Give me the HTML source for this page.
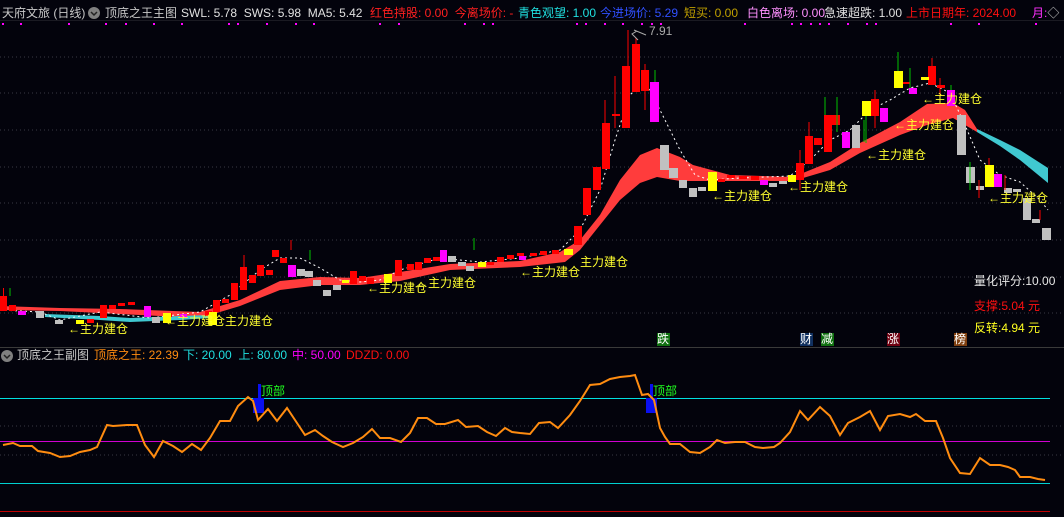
<!DOCTYPE html>
<html><head><meta charset="utf-8"><style>
html,body{margin:0;padding:0;background:#03030c;}
body{width:1064px;height:517px;overflow:hidden;position:relative;font-family:"Liberation Sans","Noto Sans CJK SC",sans-serif;}
.t{position:absolute;font-size:12px;white-space:nowrap;line-height:15px;}
</style></head><body>
<svg width="1064" height="517" style="position:absolute;left:0;top:0" xmlns="http://www.w3.org/2000/svg">
<g stroke="#3a3a44" stroke-dasharray="1,3" stroke-width="1">
<line x1="0" y1="57" x2="1064" y2="57"/><line x1="0" y1="93" x2="1064" y2="93"/><line x1="0" y1="130" x2="1064" y2="130"/><line x1="0" y1="167" x2="1064" y2="167"/><line x1="0" y1="203" x2="1064" y2="203"/><line x1="0" y1="240" x2="1064" y2="240"/><line x1="0" y1="277" x2="1064" y2="277"/><line x1="0" y1="313" x2="1064" y2="313"/>
<line x1="0" y1="426" x2="1064" y2="426"/><line x1="0" y1="455" x2="1064" y2="455"/>
</g>
<line x1="0" y1="347.5" x2="1064" y2="347.5" stroke="#3a3a3a"/>
<line x1="0" y1="20.5" x2="1064" y2="20.5" stroke="#1a1a22"/>
<g fill="#ff00ff">
<rect x="2" y="23" width="2" height="2"/><rect x="20" y="23" width="2" height="2"/><rect x="68" y="23" width="2" height="2"/><rect x="105" y="23" width="2" height="2"/><rect x="125" y="23" width="2" height="2"/><rect x="153" y="23" width="2" height="2"/><rect x="181" y="23" width="2" height="2"/><rect x="228" y="23" width="2" height="2"/><rect x="237" y="23" width="2" height="2"/><rect x="266" y="23" width="2" height="2"/><rect x="295" y="23" width="2" height="2"/><rect x="313" y="23" width="2" height="2"/><rect x="379" y="23" width="2" height="2"/><rect x="398" y="23" width="2" height="2"/><rect x="464" y="23" width="2" height="2"/><rect x="483" y="23" width="2" height="2"/><rect x="492" y="23" width="2" height="2"/><rect x="576" y="23" width="2" height="2"/><rect x="585" y="23" width="2" height="2"/><rect x="604" y="23" width="2" height="2"/><rect x="622" y="23" width="2" height="2"/><rect x="641" y="23" width="2" height="2"/><rect x="651" y="23" width="2" height="2"/><rect x="660" y="23" width="2" height="2"/><rect x="744" y="23" width="2" height="2"/><rect x="791" y="23" width="2" height="2"/><rect x="800" y="23" width="2" height="2"/><rect x="810" y="23" width="2" height="2"/><rect x="819" y="23" width="2" height="2"/><rect x="828" y="23" width="2" height="2"/><rect x="847" y="23" width="2" height="2"/><rect x="866" y="23" width="2" height="2"/><rect x="875" y="23" width="2" height="2"/><rect x="950" y="23" width="2" height="2"/><rect x="978" y="23" width="2" height="2"/><rect x="1035" y="23" width="2" height="2"/>
</g>
<polygon fill="#ff3c3c" points="0,306 60,308 120,309 200,312 240,300 280,281 320,277 360,278 400,272 450,264 520,261 560,252 580,240 600,215 620,180 640,155 657,148 680,157 693,165 730,175 793,177 830,162 860,143 900,122 927,104 953,103 965,110 977,129 977,132 965,125 953,118 927,125 900,135 860,153 830,170 793,181 730,181 693,181 680,181 657,177 640,183 620,200 600,225 580,250 565,262 520,267 450,270 400,281 360,285 320,285 280,290 240,306 200,318 120,314 60,311 0,310"/>
<polygon fill="#40c8d0" points="977,129 1000,140 1020,150 1048,168 1048,183 1020,160 1000,146 977,132"/>
<polygon fill="#40c8d0" points="45,314 100,316 130,318 180,316 210,315 210,318 180,320 130,322 100,320 45,317"/>
<polyline fill="none" stroke="#ffffff" stroke-width="1" stroke-dasharray="2,3" points="0,310 40,312 60,320 100,312 150,318 200,312 230,295 260,270 280,258 300,258 320,268 340,280 360,282 380,280 400,270 440,258 480,262 520,258 560,250 580,230 600,190 615,140 630,95 645,80 660,110 680,150 695,175 710,180 740,178 790,176 810,160 830,140 850,130 870,110 890,100 910,88 930,83 950,93 965,125 980,160 1000,175 1020,182 1040,200 1048,210"/>
<g fill="#ff0000">
<rect x="0" y="296" width="7" height="15"/><rect x="9" y="305" width="7" height="6"/><rect x="87" y="319" width="7" height="4"/><rect x="100" y="305" width="7" height="13"/><rect x="109" y="305" width="7" height="4"/><rect x="118" y="303" width="7" height="3"/><rect x="128" y="302" width="7" height="3"/><rect x="165" y="313" width="7" height="4"/><rect x="205" y="311" width="7" height="5"/><rect x="213" y="300" width="7" height="12"/><rect x="222" y="299" width="7" height="4"/><rect x="231" y="283" width="7" height="17"/><rect x="240" y="267" width="7" height="23"/><rect x="249" y="275" width="7" height="8"/><rect x="257" y="265" width="7" height="11"/><rect x="266" y="270" width="7" height="5"/><rect x="272" y="250" width="7" height="7"/><rect x="280" y="258" width="7" height="5"/><rect x="350" y="271" width="7" height="13"/><rect x="359" y="276" width="7" height="5"/><rect x="367" y="278" width="7" height="6"/><rect x="395" y="260" width="7" height="16"/><rect x="407" y="264" width="7" height="6"/><rect x="415" y="262" width="7" height="8"/><rect x="424" y="258" width="7" height="5"/><rect x="433" y="257" width="7" height="4"/><rect x="487" y="262" width="7" height="3"/><rect x="497" y="257" width="7" height="5"/><rect x="507" y="255" width="7" height="4"/><rect x="517" y="253" width="7" height="3"/><rect x="530" y="253" width="7" height="3"/><rect x="540" y="251" width="7" height="4"/><rect x="552" y="250" width="7" height="4"/>
<rect x="574" y="226" width="8" height="19"/><rect x="583" y="188" width="8" height="27"/><rect x="593" y="167" width="8" height="23"/><rect x="602" y="123" width="8" height="46"/><rect x="612" y="114" width="8" height="2"/><rect x="622" y="66" width="8" height="62"/><rect x="632" y="44" width="8" height="48"/><rect x="641" y="70" width="8" height="21"/><rect x="718" y="179" width="7" height="3"/><rect x="727" y="175" width="8" height="3"/><rect x="739" y="176" width="8" height="3"/><rect x="751" y="176" width="8" height="4"/><rect x="796" y="163" width="8" height="17"/><rect x="805" y="136" width="8" height="28"/><rect x="814" y="138" width="8" height="7"/><rect x="824" y="115" width="8" height="37"/><rect x="832" y="115" width="8" height="10"/><rect x="871" y="99" width="8" height="17"/><rect x="902" y="82" width="8" height="2"/><rect x="928" y="66" width="8" height="19"/><rect x="937" y="85" width="8" height="3"/>
</g>
<g fill="#ff00ff">
<rect x="18" y="311" width="8" height="4"/><rect x="144" y="306" width="7" height="11"/><rect x="180" y="314" width="7" height="4"/><rect x="288" y="265" width="8" height="12"/><rect x="440" y="250" width="7" height="12"/><rect x="519" y="256" width="7" height="4"/><rect x="650" y="82" width="9" height="40"/><rect x="760" y="180" width="8" height="5"/><rect x="842" y="132" width="8" height="16"/><rect x="880" y="108" width="8" height="14"/><rect x="909" y="88" width="8" height="6"/><rect x="947" y="90" width="8" height="16"/><rect x="994" y="174" width="8" height="13"/>
</g>
<g fill="#c0c0c0">
<rect x="36" y="311" width="8" height="7"/><rect x="55" y="320" width="8" height="4"/><rect x="152" y="317" width="8" height="6"/><rect x="297" y="269" width="8" height="7"/><rect x="305" y="271" width="8" height="6"/><rect x="313" y="280" width="8" height="6"/><rect x="323" y="290" width="8" height="6"/><rect x="333" y="285" width="8" height="5"/><rect x="448" y="256" width="8" height="6"/><rect x="458" y="262" width="8" height="4"/><rect x="466" y="266" width="8" height="5"/><rect x="660" y="145" width="9" height="25"/><rect x="669" y="168" width="9" height="10"/><rect x="679" y="180" width="8" height="8"/><rect x="689" y="188" width="8" height="9"/><rect x="698" y="187" width="8" height="4"/><rect x="769" y="183" width="8" height="4"/><rect x="779" y="181" width="8" height="3"/><rect x="852" y="125" width="8" height="23"/><rect x="957" y="115" width="9" height="40"/><rect x="966" y="167" width="9" height="16"/><rect x="976" y="186" width="8" height="4"/><rect x="1004" y="188" width="8" height="5"/><rect x="1013" y="189" width="8" height="3"/><rect x="1023" y="198" width="8" height="22"/><rect x="1032" y="219" width="8" height="4"/><rect x="1042" y="228" width="9" height="12"/>
</g>
<g fill="#ffff00">
<rect x="76" y="320" width="8" height="4"/><rect x="163" y="313" width="8" height="10"/><rect x="209" y="312" width="8" height="13"/><rect x="342" y="280" width="7" height="3"/><rect x="384" y="274" width="8" height="9"/><rect x="478" y="262" width="8" height="5"/><rect x="564" y="249" width="9" height="6"/><rect x="708" y="172" width="9" height="19"/><rect x="788" y="175" width="8" height="7"/><rect x="862" y="101" width="9" height="15"/><rect x="894" y="71" width="9" height="17"/><rect x="921" y="77" width="8" height="3"/><rect x="985" y="165" width="9" height="22"/>
</g>
<g stroke="#ff0000" stroke-width="1">
<line x1="3.5" y1="288" x2="3.5" y2="296"/><line x1="628" y1="30" x2="628" y2="66"/><line x1="636" y1="38" x2="636" y2="44"/><line x1="615" y1="76" x2="615" y2="128"/><line x1="605" y1="100" x2="605" y2="123"/><line x1="645" y1="64" x2="645" y2="110"/><line x1="800" y1="150" x2="800" y2="190"/><line x1="809" y1="122" x2="809" y2="136"/><line x1="932" y1="58" x2="932" y2="66"/><line x1="875" y1="90" x2="875" y2="128"/><line x1="940" y1="78" x2="940" y2="100"/><line x1="291" y1="240" x2="291" y2="250"/><line x1="244" y1="255" x2="244" y2="267"/><line x1="1040" y1="210" x2="1040" y2="220"/><line x1="989" y1="158" x2="989" y2="165"/><line x1="979" y1="180" x2="979" y2="198"/><line x1="1005" y1="175" x2="1005" y2="190"/>
</g>
<g stroke="#00c000" stroke-width="1">
<line x1="655" y1="70" x2="655" y2="82"/><line x1="825" y1="97" x2="825" y2="115"/><line x1="837" y1="97" x2="837" y2="132"/><line x1="898" y1="52" x2="898" y2="71"/><line x1="910" y1="68" x2="910" y2="88"/><line x1="951" y1="85" x2="951" y2="90"/><line x1="970" y1="162" x2="970" y2="190"/><line x1="866" y1="116" x2="866" y2="143"/><line x1="864" y1="120" x2="864" y2="142"/><line x1="10" y1="288" x2="10" y2="296"/><line x1="310" y1="250" x2="310" y2="260"/><line x1="474" y1="238" x2="474" y2="250"/>
</g>
<line x1="0" y1="398.5" x2="1050" y2="398.5" stroke="#00e0e0"/>
<line x1="0" y1="441.5" x2="1050" y2="441.5" stroke="#d000d0"/>
<line x1="0" y1="483.5" x2="1050" y2="483.5" stroke="#00d0d0"/>
<line x1="0" y1="511.5" x2="1050" y2="511.5" stroke="#c00000"/>
<rect x="253" y="398" width="11" height="15" fill="#0a10f0"/><rect x="258" y="384" width="3" height="14" fill="#0a10f0"/>
<rect x="646" y="398" width="11" height="15" fill="#0a10f0"/><rect x="650" y="384" width="3" height="14" fill="#0a10f0"/>
<polyline fill="none" stroke="#ff8c10" stroke-width="2" points="3,445 13,443 20,446 32,446 38,451 50,453 60,457 70,456 80,452 90,450 97,447 107,425 113,426 127,425 137,425 145,445 154,457 163,441 173,446 182,452 192,444 201,450 210,438 220,421 230,421 238,406 248,397 253,401 258,420 268,409 277,421 287,408 297,423 305,435 315,430 323,436 332,442 343,447 353,443 363,437 372,429 380,438 390,438 401,442 410,433 418,418 427,418 436,424 445,424 458,420 466,427 478,426 487,432 496,436 505,428 512,432 520,433 530,434 539,423 550,422 558,428 570,415 580,401 585,393 590,385 600,384 610,379 620,377 630,376 635,375 642,395 648,394 654,400 660,428 665,437 670,444 680,444 690,452 700,453 710,447 717,440 725,443 735,442 745,442 755,447 763,448 774,447 780,443 790,432 800,411 808,420 820,407 830,416 840,435 848,423 860,417 870,411 880,430 888,416 900,414 910,417 916,414 925,421 936,421 943,438 950,458 960,473 970,474 980,458 990,465 1000,465 1008,467 1015,470 1020,477 1030,477 1038,479 1045,480"/>
<circle cx="94" cy="13" r="6" fill="#808080"/><path d="M91 12 L94 15 L97 12" stroke="#222" stroke-width="1.5" fill="none"/>
<circle cx="7" cy="356" r="6" fill="#808080"/><path d="M4 355 L7 358 L10 355" stroke="#222" stroke-width="1.5" fill="none"/>
<rect x="657" y="333" width="13" height="13" fill="#107010"/><rect x="800" y="333" width="13" height="13" fill="#103060"/><rect x="821" y="333" width="13" height="13" fill="#107010"/><rect x="887" y="333" width="13" height="13" fill="#700010"/><rect x="954" y="333" width="13" height="13" fill="#804010"/>
<path d="M638 40 L632 34 L637 31 M634 30 L646 35" stroke="#aaa" fill="none" stroke-width="1"/>
</svg>
<div class="t" style="left:2px;top:6px;color:#c8c8c8">天府文旅 (日线)</div>
<div class="t" style="left:105px;top:6px;color:#c8c8c8">顶底之王主图</div>
<div class="t" style="left:181px;top:6px;color:#e0e0e0">SWL: 5.78&nbsp; SWS: 5.98&nbsp; MA5: 5.42</div>
<div class="t" style="left:370px;top:6px;color:#ff2020">红色持股: 0.00&nbsp; 今离场价: -</div>
<div class="t" style="left:518px;top:6px;color:#20e0e0">青色观望: 1.00</div>
<div class="t" style="left:600px;top:6px;color:#3050ff">今进场价: 5.29</div>
<div class="t" style="left:684px;top:6px;color:#c0a000">短买: 0.00</div>
<div class="t" style="left:747px;top:6px;color:#ff90ff">白色离场: 0.00</div>
<div class="t" style="left:824px;top:6px;color:#e0e0e0">急速超跌: 1.00</div>
<div class="t" style="left:906px;top:6px;color:#ff1010">上市日期年: 2024.00</div>
<div class="t" style="left:1032px;top:6px;color:#ff30ff">月:<span style="color:#ccc">◇</span></div>
<div class="t" style="left:649px;top:24px;color:#aaa">7.91</div>
<div class="t" style="left:17px;top:348px;color:#c8c8c8">顶底之王副图</div>
<div class="t" style="left:94px;top:348px;color:#ff8c10">顶底之王: 22.39</div>
<div class="t" style="left:183px;top:348px;color:#20e0e0">下: 20.00&nbsp; 上: 80.00</div>
<div class="t" style="left:292px;top:348px;color:#ff00ff">中: 50.00</div>
<div class="t" style="left:346px;top:348px;color:#ff1010">DDZD: 0.00</div>
<div class="t" style="left:261px;top:384px;color:#20ff20">顶部</div>
<div class="t" style="left:653px;top:384px;color:#20ff20">顶部</div>
<div class="t" style="left:974px;top:274px;color:#e8e8e8">量化评分:10.00</div>
<div class="t" style="left:974px;top:299px;color:#ff1010">支撑:5.04 元</div>
<div class="t" style="left:974px;top:321px;color:#ffff20">反转:4.94 元</div>
<div class="t" style="left:657px;top:332px;color:#fff">跌</div>
<div class="t" style="left:800px;top:332px;color:#fff">财</div>
<div class="t" style="left:821px;top:332px;color:#fff">减</div>
<div class="t" style="left:887px;top:332px;color:#fff">涨</div>
<div class="t" style="left:954px;top:332px;color:#fff">榜</div>
<div style="color:#ffff30">
<div class="t" style="left:68px;top:322px">←主力建仓</div>
<div class="t" style="left:165px;top:314px">←主力建仓</div>
<div class="t" style="left:225px;top:314px">主力建仓</div>
<div class="t" style="left:367px;top:281px">←主力建仓</div>
<div class="t" style="left:416px;top:276px">←主力建仓</div>
<div class="t" style="left:520px;top:265px">←主力建仓</div>
<div class="t" style="left:580px;top:255px">主力建仓</div>
<div class="t" style="left:712px;top:189px">←主力建仓</div>
<div class="t" style="left:788px;top:180px">←主力建仓</div>
<div class="t" style="left:866px;top:148px">←主力建仓</div>
<div class="t" style="left:894px;top:118px">←主力建仓</div>
<div class="t" style="left:922px;top:92px">←主力建仓</div>
<div class="t" style="left:988px;top:191px">←主力建仓</div>
</div>
</body></html>
